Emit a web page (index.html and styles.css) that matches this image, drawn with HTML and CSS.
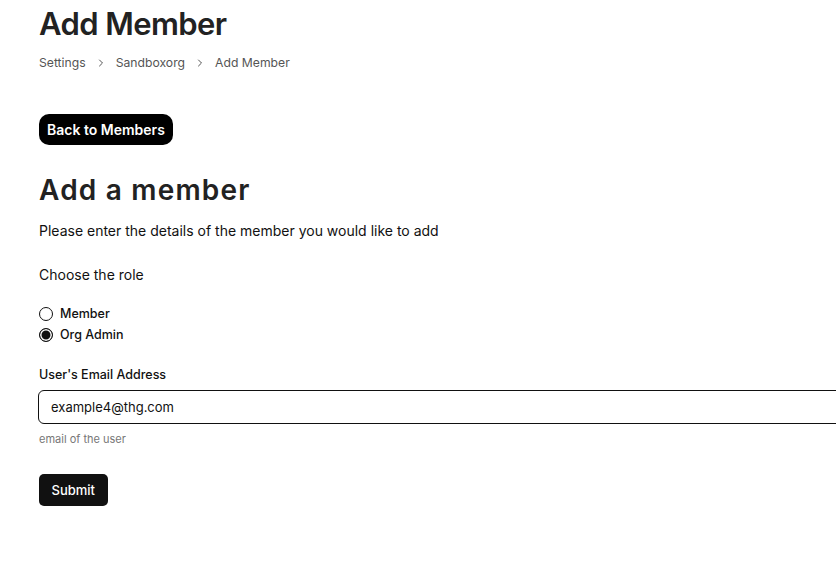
FILE: index.html
```html
<!DOCTYPE html>
<html>
<head>
<meta charset="utf-8">
<link rel="stylesheet" href="styles.css">
</head>
<body>
<main class="page">
  <h1 class="title">Add Member</h1>
  <nav class="crumbs">
    <span>Settings</span>
    <svg class="chev" width="12" height="12" viewBox="0 0 24 24"><path d="M9 6l6 6-6 6" fill="none" stroke="#555" stroke-width="2" stroke-linecap="round" stroke-linejoin="round"/></svg>
    <span>Sandboxorg</span>
    <svg class="chev" width="12" height="12" viewBox="0 0 24 24"><path d="M9 6l6 6-6 6" fill="none" stroke="#555" stroke-width="2" stroke-linecap="round" stroke-linejoin="round"/></svg>
    <span>Add Member</span>
  </nav>
  <button class="back">Back to Members</button>
  <h2 class="subtitle">Add a member</h2>
  <p class="intro">Please enter the details of the member you would like to add</p>
  <p class="role-label">Choose the role</p>
  <div class="radios">
    <label class="radio"><span class="dot"></span>Member</label>
    <label class="radio"><span class="dot checked"></span>Org Admin</label>
  </div>
  <div class="field">
    <label class="field-label">User's Email Address</label>
    <div class="input">example4@thg.com</div>
    <div class="help">email of the user</div>
  </div>
  <button class="submit">Submit</button>
</main>
</body>
</html>
```
FILE: styles.css
```css
html, body { margin: 0; padding: 0; overflow: hidden; background: #fff; }
body { font-family: Inter, "Noto Sans", sans-serif; color: #111; }
.page { padding: 0 0 0 39px; width: 900px; display: flex; flex-direction: column; align-items: flex-start; }
.title { font-size: 31px; font-weight: 600; margin: 5px 0 0; line-height: 38px; color: #222; letter-spacing: -0.6px; }
.crumbs { display: flex; align-items: center; gap: 9px; font-size: 12.2px; color: #555; margin-top: 11px; line-height: 18px; }
.back { margin-top: 42px; background: #000; color: #fff; border: none; border-radius: 10px; font: 600 14px Inter, sans-serif; height: 31px; padding: 0 8px; }
.subtitle { font-size: 28px; font-weight: 600; margin: 28px 0 0; line-height: 34px; color: #222; letter-spacing: 1.2px; }
.intro { font-size: 14px; margin: 15px 0 0; line-height: 18px; }
.role-label { font-size: 14px; margin: 26px 0 0; line-height: 18px; }
.radios { display: flex; flex-direction: column; gap: 5px; margin-top: 22px; }
.radio { display: flex; align-items: center; gap: 7px; font-size: 12.5px; font-weight: 500; line-height: 16px; }
.dot { width: 14px; height: 14px; border: 1.5px solid #111; border-radius: 50%; box-sizing: border-box; background: #fff; }
.dot.checked { background: #111; box-shadow: inset 0 0 0 1.5px #fff; border-color: #111; }
.field { display: flex; flex-direction: column; margin-top: 24px; width: 860px; }
.field-label { font-size: 12.5px; font-weight: 500; line-height: 16px; }
.input { margin: 7px 0 0 -1px; height: 34px; box-sizing: border-box; border: 1px solid #111; border-radius: 6px; padding: 0 12px; display: flex; align-items: center; font-size: 13px; }
.help { font-size: 11px; color: #777; margin-top: 8px; line-height: 14px; }
.submit { margin-top: 28px; background: #111; color: #fff; border: none; border-radius: 5px; font: 500 13px Inter, sans-serif; height: 32px; padding: 0 12.5px; }
```
